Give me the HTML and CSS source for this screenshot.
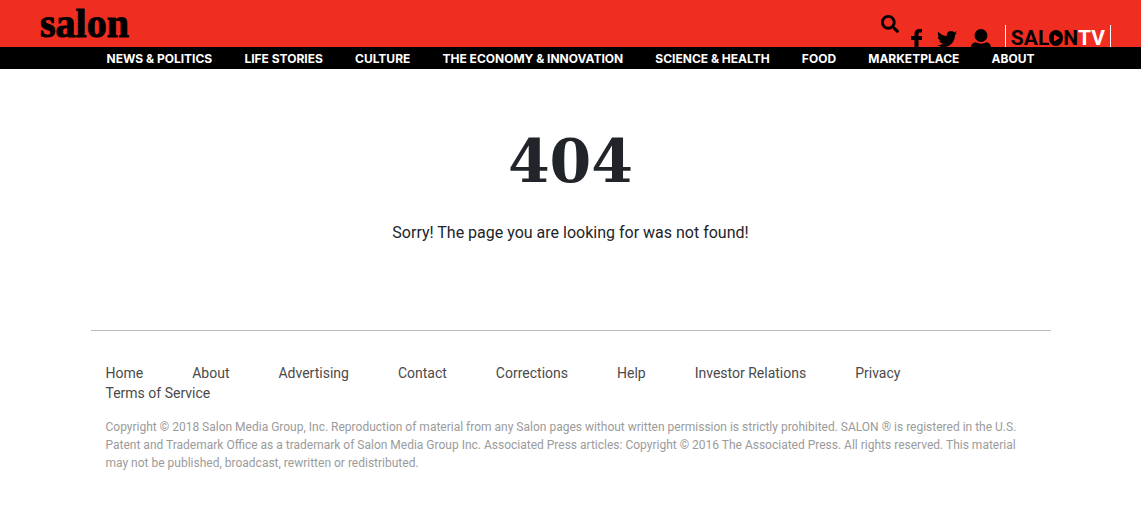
FILE: index.html
```html
<!DOCTYPE html>
<html lang="en">
<head>
<meta charset="utf-8">
<meta name="viewport" content="width=device-width, initial-scale=1">
<title>404 | Salon.com</title>
<link rel="stylesheet" href="styles.css">
</head>
<body>
<header class="masthead">
  <a class="logo" href="#">salon</a>
  <div class="tools">
    <button class="search" type="button" aria-label="Search">
      <svg width="18" height="18" viewBox="0 0 512 512" aria-hidden="true"><path d="M505 442.700 405.300 343c-4.500-4.500-10.600-7-17-7H372c27.600-35.300 44-79.700 44-128C416 93.100 322.900 0 208 0S0 93.100 0 208s93.100 208 208 208c48.300 0 92.700-16.400 128-44v16.300c0 6.400 2.500 12.500 7 17l99.700 99.700c9.400 9.400 24.600 9.400 33.900 0l28.300-28.300c9.400-9.400 9.400-24.600.1-34zM208 336c-70.700 0-128-57.200-128-128 0-70.700 57.200-128 128-128 70.700 0 128 57.200 128 128 0 70.700-57.200 128-128 128z"/></svg>
    </button>
    <a class="social" href="#" aria-label="Facebook">
      <svg width="12" height="20" viewBox="0 0 12 20" aria-hidden="true"><path d="M11 0H8.500C5.400 0 3.500 1.800 3.500 4.800V7H0v4h3.500v9h4v-9H11V7H7.500V5.300c0-1.100.5-1.700 1.600-1.700H11z"/></svg>
    </a>
    <a class="social" href="#" aria-label="Twitter">
      <svg width="20" height="20" viewBox="0 0 512 512" aria-hidden="true"><path d="M459.370 151.716c.325 4.548.325 9.097.325 13.645 0 138.720-105.583 298.558-298.558 298.558-59.452 0-114.680-17.219-161.137-47.106 8.447.974 16.568 1.299 25.340 1.299 49.055 0 94.213-16.568 130.274-44.832-46.132-.975-84.792-31.188-98.112-72.772 6.498.974 12.995 1.624 19.818 1.624 9.421 0 18.843-1.300 27.614-3.573-48.081-9.747-84.143-51.980-84.143-102.985v-1.299c13.969 7.797 30.214 12.670 47.431 13.319-28.264-18.843-46.781-51.005-46.781-87.391 0-19.492 5.197-37.360 14.294-52.954 51.655 63.675 129.300 105.258 216.365 109.807-1.624-7.797-2.599-15.918-2.599-24.040 0-57.828 46.782-104.934 104.934-104.934 30.213 0 57.502 12.670 76.670 33.137 23.715-4.548 46.456-13.320 66.599-25.340-7.798 24.366-24.366 44.833-46.132 57.827 21.117-2.273 41.584-8.122 60.426-16.243-14.292 20.791-32.161 39.308-52.628 54.253z"/></svg>
    </a>
    <a class="social" href="#" aria-label="Account">
      <svg width="20" height="22" viewBox="0 0 20 22" aria-hidden="true"><circle cx="10" cy="6.500" r="6.500"/><path d="M0 22v-4c0-2.800 2-4.700 4.500-4.800 3.200 1.900 7.800 1.900 11 0 2.500.1 4.500 2 4.500 4.800v4z"/></svg>
    </a>
    <a class="tv" href="#" aria-label="Salon TV">
      <span>SAL</span><svg width="14" height="16" viewBox="0 0 14 16" aria-hidden="true"><ellipse cx="7" cy="8" rx="7" ry="8"/><path class="play" d="M5 4.500v7L11 8z"/></svg><span>N</span><span class="tv-white">TV</span>
    </a>
  </div>
</header>
<nav class="sections" aria-label="Sections">
  <div class="sections-row">
    <a href="#">NEWS &amp; POLITICS</a>
    <a href="#">LIFE STORIES</a>
    <a href="#">CULTURE</a>
    <a href="#">THE ECONOMY &amp; INNOVATION</a>
    <a href="#">SCIENCE &amp; HEALTH</a>
    <a href="#">FOOD</a>
    <a href="#">MARKETPLACE</a>
    <a href="#">ABOUT</a>
  </div>
</nav>
<main class="error">
  <h1>404</h1>
  <p>Sorry! The page you are looking for was not found!</p>
</main>
<footer class="footer">
  <nav class="footer-links" aria-label="Footer">
    <a href="#">Home</a>
    <a href="#">About</a>
    <a href="#">Advertising</a>
    <a href="#">Contact</a>
    <a href="#">Corrections</a>
    <a href="#">Help</a>
    <a href="#">Investor Relations</a>
    <a href="#">Privacy</a>
    <a href="#">Terms of Service</a>
  </nav>
  <p class="copyright">Copyright © 2018 Salon Media Group, Inc. Reproduction of material from any Salon pages without written permission is strictly prohibited. SALON ® is registered in the U.S. Patent and Trademark Office as a trademark of Salon Media Group Inc. Associated Press articles: Copyright © 2016 The Associated Press. All rights reserved. This material may not be published, broadcast, rewritten or redistributed.</p>
</footer>
</body>
</html>
```
FILE: styles.css
```css
* {
  box-sizing: border-box;
}

body {
  margin: 0;
  background: #fff;
  color: #212529;
  font-family: Roboto, "Liberation Sans", sans-serif;
  font-size: 16px;
  line-height: 24px;
}

a {
  color: inherit;
  text-decoration: none;
}

.masthead {
  display: flex;
  justify-content: space-between;
  align-items: flex-start;
  height: 47px;
  padding: 0 30px 0 40px;
  overflow: hidden;
  background: #ef2d20;
  color: #000;
}

.logo {
  font-family: "Liberation Serif", serif;
  font-size: 40px;
  font-weight: 700;
  line-height: 47px;
  -webkit-text-stroke: 1px #000;
}

.tools {
  display: flex;
  align-items: flex-start;
}

.tools svg {
  display: block;
  fill: currentColor;
}

.search {
  margin: 15px 12px 0 0;
  padding: 0;
  border: 0;
  background: none;
  color: inherit;
}

.social {
  margin: 29px 14px 0 0;
}

.tv {
  display: flex;
  align-items: center;
  height: 22px;
  margin-top: 25px;
  padding: 4px 5px 0;
  border: solid #fff;
  border-width: 0 1px;
  font-size: 21px;
  font-weight: 700;
  line-height: 18px;
}

.tv .play {
  fill: #ef2d20;
}

.tv-white {
  color: #fff;
}

.sections {
  background: #000;
  color: #fff;
  font-family: Inter, "Liberation Sans", sans-serif;
  font-size: 12px;
  font-weight: 700;
}

.sections-row {
  display: flex;
  justify-content: space-between;
  max-width: 960px;
  margin: 0 auto;
  padding: 1px 16px 0;
  line-height: 21px;
  white-space: nowrap;
}

.error {
  padding: 56px 16px 85px;
  text-align: center;
}

.error h1 {
  margin: 0 0 24px;
  font-family: "DejaVu Serif", serif;
  font-size: 60px;
  font-weight: 700;
  line-height: 72px;
}

.error p {
  margin: 0;
}

.footer {
  max-width: 960px;
  margin: 0 auto;
  padding: 32px 15px;
  border-top: 1px solid #bbb;
}

.footer-links {
  display: flex;
  flex-wrap: wrap;
  column-gap: 49px;
  color: #4a4a4a;
  font-size: 14px;
  line-height: 20px;
}

.copyright {
  margin: 15px 0 0;
  color: #9b9b9b;
  font-size: 12px;
  line-height: 18px;
}
```
